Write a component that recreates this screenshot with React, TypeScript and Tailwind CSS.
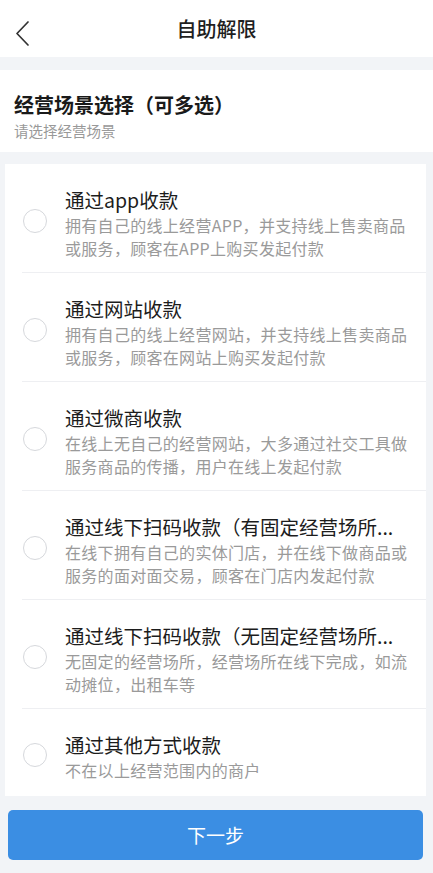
const scenes = [
  {
    title: "通过app收款",
    desc: "拥有自己的线上经营APP，并支持线上售卖商品或服务，顾客在APP上购买发起付款",
  },
  {
    title: "通过网站收款",
    desc: "拥有自己的线上经营网站，并支持线上售卖商品或服务，顾客在网站上购买发起付款",
  },
  {
    title: "通过微商收款",
    desc: "在线上无自己的经营网站，大多通过社交工具做服务商品的传播，用户在线上发起付款",
  },
  {
    title: "通过线下扫码收款（有固定经营场所...",
    desc: "在线下拥有自己的实体门店，并在线下做商品或服务的面对面交易，顾客在门店内发起付款",
  },
  {
    title: "通过线下扫码收款（无固定经营场所...",
    desc: "无固定的经营场所，经营场所在线下完成，如流动摊位，出租车等",
  },
  {
    title: "通过其他方式收款",
    desc: "不在以上经营范围内的商户",
  },
];

export default function App() {
  return (
    <div
      className="min-h-[873px] w-full bg-[#f2f4f7] pb-[14px]"
      style={{ fontFamily: '"Noto Sans CJK SC", "Noto Sans", sans-serif' }}
    >
      {/* Header */}
      <header className="relative flex h-[57px] items-center justify-center bg-white">
        <button className="absolute left-[12px] top-[17px] p-[3px]">
          <svg width="16" height="26" viewBox="0 0 16 26" fill="none">
            <polyline
              points="13,2 2,13.5 13,25"
              stroke="#333"
              strokeWidth="1.7"
              strokeLinecap="round"
              strokeLinejoin="round"
            />
          </svg>
        </button>
        <h1 className="text-[20px] font-medium leading-[30px] text-[#1f1f1f]">
          自助解限
        </h1>
      </header>

      {/* Section title */}
      <div className="mt-[13px] bg-white px-[14px] pb-[11px] pt-[20px]">
        <h2 className="text-[20px] font-bold leading-[30px] text-[#1a1a1a]">
          经营场景选择（可多选）
        </h2>
        <p className="text-[14.5px] leading-[21px] text-[#999]">
          请选择经营场景
        </p>
      </div>

      {/* Scene list */}
      <div className="ml-[5px] mr-[7px] mt-[12px] bg-white">
        {scenes.map((scene, index) => (
          <div key={scene.title}>
            {index > 0 && <div className="ml-[17px] h-px bg-[#eeeff2]" />}
            <div
              className={`flex items-center pl-[18px] pr-[16px] pt-[22px] ${
                index === scenes.length - 1 ? "pb-[14px]" : "pb-[12px]"
              }`}
            >
              <span className="mt-[-4px] h-[24px] w-[24px] shrink-0 rounded-full border border-[#d6d8dc] bg-white" />
              <div className="ml-[18px] min-w-0 flex-1">
                <p className="whitespace-nowrap text-[19.5px] leading-[28px] text-[#1c1c1c]">
                  {scene.title}
                </p>
                <p className="text-[16px] leading-[23px] tracking-[0.3px] text-[#9a9a9a]">
                  {scene.desc}
                </p>
              </div>
            </div>
          </div>
        ))}
      </div>

      {/* Next button */}
      <div className="ml-[8px] mr-[10px] mt-[14px]">
        <button className="flex h-[50px] w-full items-center justify-center rounded-[5px] bg-[#3b8ee3] text-[19px] text-white">
          下一步
        </button>
      </div>
    </div>
  );
}
